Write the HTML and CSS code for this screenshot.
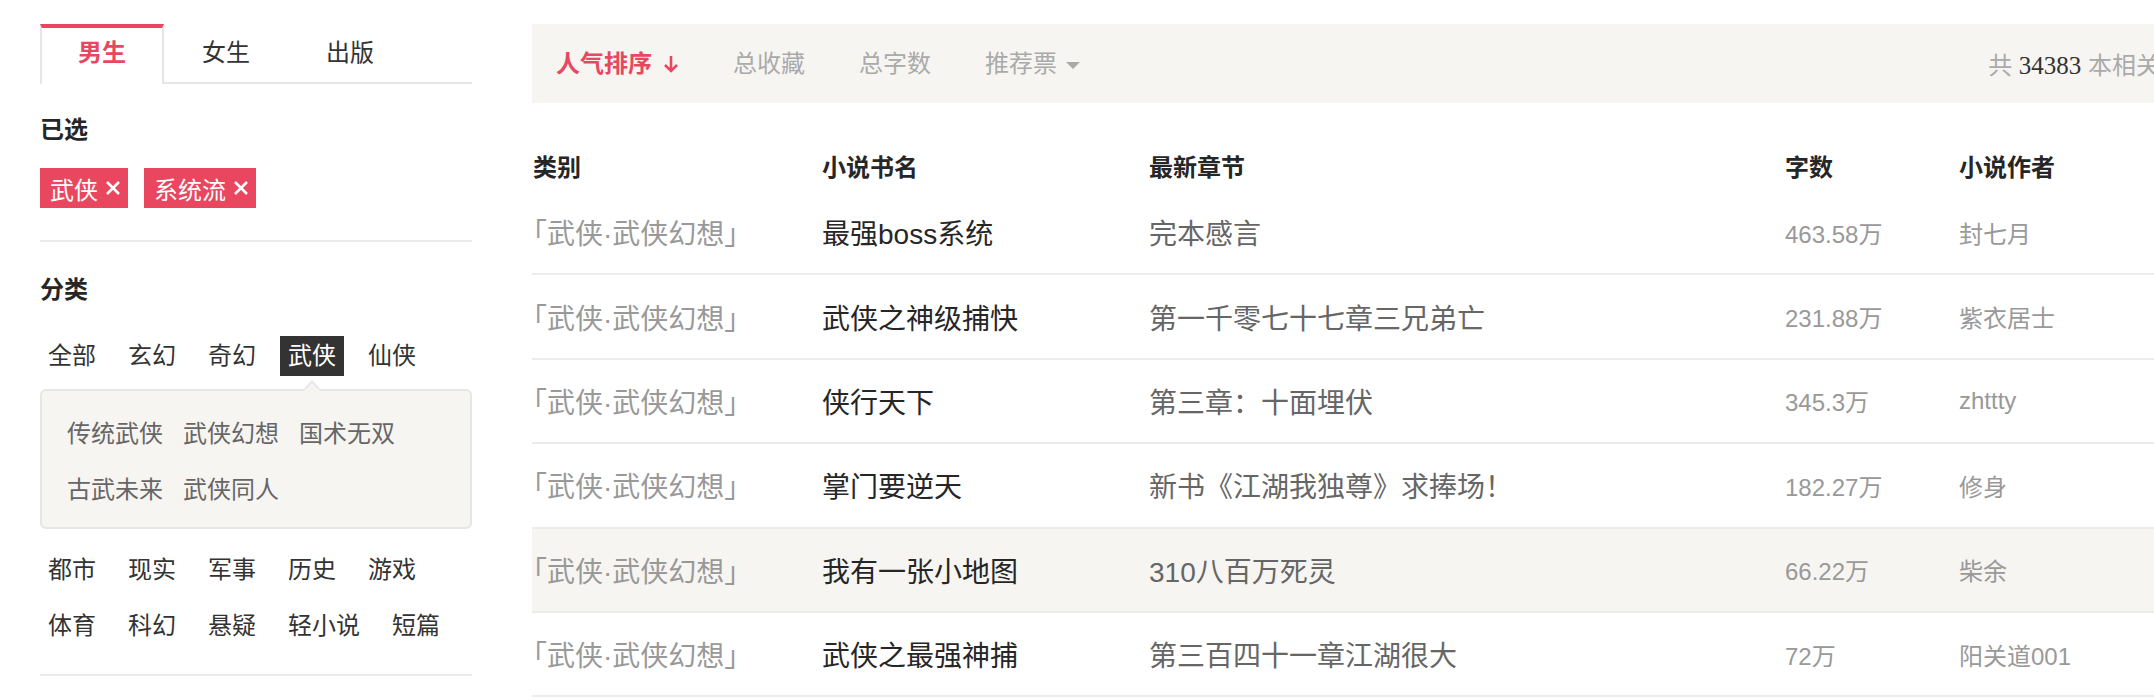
FILE: index.html
```html
<!DOCTYPE html>
<html lang="zh-CN">
  <head>
    <meta charset="UTF-8" />
    <meta name="viewport" content="width=device-width, initial-scale=1.0" />
    <title>全部作品</title>
    <link rel="stylesheet" href="styles.css">
  </head>
  <body>
    <div class="page">
      <aside class="filter">
        <div class="tabs">
          <a class="tabs__item tabs__item--active">男生</a>
          <a class="tabs__item">女生</a>
          <a class="tabs__item">出版</a>
        </div>

        <div class="filter__section">
          <h3 class="filter__title">已选</h3>
          <div class="chosen">
            <span class="chosen__tag">武侠<svg width="16" height="16" viewBox="0 0 16 16"><path d="M2 2l12 12M14 2L2 14" stroke="#fff" stroke-width="2.6" /></svg></span>
            <span class="chosen__tag">系统流<svg width="16" height="16" viewBox="0 0 16 16"><path d="M2 2l12 12M14 2L2 14" stroke="#fff" stroke-width="2.6" /></svg></span>
          </div>
        </div>

        <div class="filter__section filter__section--types">
          <h3 class="filter__title">分类</h3>
          <ul class="types">
            <li class="types__item">全部</li>
            <li class="types__item">玄幻</li>
            <li class="types__item">奇幻</li>
            <li class="types__item types__item--active">武侠</li>
            <li class="types__item">仙侠</li>
            <li class="subtypes">
              <span class="subtypes__item">传统武侠</span>
              <span class="subtypes__item">武侠幻想</span>
              <span class="subtypes__item">国术无双</span>
              <span class="subtypes__item">古武未来</span>
              <span class="subtypes__item">武侠同人</span>
            </li>
            <li class="types__item">都市</li>
            <li class="types__item">现实</li>
            <li class="types__item">军事</li>
            <li class="types__item">历史</li>
            <li class="types__item">游戏</li>
            <li class="types__item">体育</li>
            <li class="types__item">科幻</li>
            <li class="types__item">悬疑</li>
            <li class="types__item">轻小说</li>
            <li class="types__item">短篇</li>
          </ul>
        </div>
      </aside>

      <main class="books">
        <div class="sort">
          <a class="sort__item sort__item--active">人气排序<svg class="sort__arrow" width="16" height="18" viewBox="0 0 16 18"><path d="M8 1v15M2 10l6 6 6-6" fill="none" stroke="currentColor" stroke-width="2.6" /></svg></a>
          <a class="sort__item">总收藏</a>
          <a class="sort__item">总字数</a>
          <a class="sort__item">推荐票<span class="sort__caret"></span></a>
          <p class="sort__total">共 <span class="sort__count">34383</span> 本相关作品</p>
        </div>

        <div class="book-list">
          <div class="book-list__row book-list__row--head">
            <span>类别</span>
            <span>小说书名</span>
            <span>最新章节</span>
            <span>字数</span>
            <span>小说作者</span>
          </div>
          <div class="book-list__row">
            <span class="book-list__type">「武侠·武侠幻想」</span>
            <span class="book-list__name">最强boss系统</span>
            <span class="book-list__chapter">完本感言</span>
            <span class="book-list__count">463.58万</span>
            <span class="book-list__author">封七月</span>
          </div>
          <div class="book-list__row">
            <span class="book-list__type">「武侠·武侠幻想」</span>
            <span class="book-list__name">武侠之神级捕快</span>
            <span class="book-list__chapter">第一千零七十七章三兄弟亡</span>
            <span class="book-list__count">231.88万</span>
            <span class="book-list__author">紫衣居士</span>
          </div>
          <div class="book-list__row">
            <span class="book-list__type">「武侠·武侠幻想」</span>
            <span class="book-list__name">侠行天下</span>
            <span class="book-list__chapter">第三章：十面埋伏</span>
            <span class="book-list__count">345.3万</span>
            <span class="book-list__author">zhttty</span>
          </div>
          <div class="book-list__row">
            <span class="book-list__type">「武侠·武侠幻想」</span>
            <span class="book-list__name">掌门要逆天</span>
            <span class="book-list__chapter">新书《江湖我独尊》求捧场！</span>
            <span class="book-list__count">182.27万</span>
            <span class="book-list__author">修身</span>
          </div>
          <div class="book-list__row book-list__row--hover">
            <span class="book-list__type">「武侠·武侠幻想」</span>
            <span class="book-list__name">我有一张小地图</span>
            <span class="book-list__chapter">310八百万死灵</span>
            <span class="book-list__count">66.22万</span>
            <span class="book-list__author">柴余</span>
          </div>
          <div class="book-list__row">
            <span class="book-list__type">「武侠·武侠幻想」</span>
            <span class="book-list__name">武侠之最强神捕</span>
            <span class="book-list__chapter">第三百四十一章江湖很大</span>
            <span class="book-list__count">72万</span>
            <span class="book-list__author">阳关道001</span>
          </div>
        </div>
      </main>
    </div>
  </body>
</html>
```

FILE: styles.css
```css
* {
  box-sizing: border-box;
}

html,
body {
  overflow: hidden;
}

body {
  margin: 0;
  background: #fff;
  color: #333;
  font-family: 'Liberation Sans', 'Noto Sans CJK SC', sans-serif;
  font-size: 24px;
}

ul {
  list-style: none;
  margin: 0;
  padding: 0;
}

.page {
  display: flex;
  gap: 60px;
  width: 2240px;
  padding: 24px 0 0 40px;
}

/* sidebar */

.filter {
  width: 432px;
  flex-shrink: 0;
}

.tabs {
  display: flex;
  height: 60px;
  border-bottom: 2px solid #e6e6e6;
}

.tabs__item {
  height: 60px;
  padding: 0 36px 6px;
  border: 2px solid transparent;
  border-top-width: 4px;
  border-bottom: 0;
  line-height: 50px;
  color: #333;
}

.tabs__item--active {
  border-color: #e6e6e6;
  border-top-color: #e8475f;
  background: #fff;
  color: #e8475f;
  font-weight: 600;
}

.filter__section {
  padding: 30px 0 32px;
  border-bottom: 2px solid #ebebeb;
}

.filter__section--types {
  padding: 32px 0 12px;
}

.filter__title {
  margin: 0;
  font-size: 24px;
  line-height: 32px;
  font-weight: 600;
  color: #262626;
}

.chosen {
  display: flex;
  gap: 16px;
  margin-top: 22px;
}

.chosen__tag {
  display: flex;
  align-items: center;
  height: 40px;
  padding: 0 7px 0 10px;
  background: #e8475f;
  color: #fff;
}

.chosen__tag svg {
  margin-left: 7px;
}

.types {
  display: flex;
  flex-wrap: wrap;
  margin-top: 30px;
}

.types__item {
  height: 40px;
  line-height: 40px;
  padding: 0 8px;
  margin: 0 16px 16px 0;
}

.types__item--active {
  background: #333;
  color: #fff;
}

.subtypes {
  position: relative;
  flex-basis: 100%;
  display: flex;
  flex-wrap: wrap;
  gap: 16px 20px;
  margin: -3px 0 21px;
  padding: 23px 25px 17px;
  background: #f6f5f2;
  border: 2px solid #e6e6e6;
  border-radius: 6px;
}

.subtypes::before,
.subtypes::after {
  content: '';
  position: absolute;
  left: 260px;
  border: 10px solid transparent;
  border-top: 0;
}

.subtypes::before {
  top: -11px;
  border-bottom: 11px solid #e6e6e6;
}

.subtypes::after {
  top: -8px;
  border-bottom: 10px solid #f6f5f2;
}

.subtypes__item {
  line-height: 40px;
  color: #666;
}

/* book list */

.books {
  width: 1700px;
  flex-shrink: 0;
}

.sort {
  display: flex;
  align-items: center;
  height: 79px;
  padding: 0 24px;
  background: #f6f5f2;
}

.sort__item {
  display: flex;
  align-items: center;
  margin-right: 54px;
  line-height: 32px;
  color: #aaa;
}

.sort__item--active {
  color: #e8475f;
  font-weight: 600;
}

.sort__arrow {
  margin-left: 11px;
}

.sort__caret {
  width: 0;
  height: 0;
  margin: 4px 0 0 9px;
  border: 7px solid transparent;
  border-top-color: #aaa;
  border-bottom: 0;
}

.sort__total {
  margin: 0 0 0 auto;
  color: #aaa;
}

.sort__count {
  font-family: 'Liberation Serif', serif;
  font-size: 25px;
  color: #333;
}

.book-list__row {
  display: grid;
  grid-template-columns: 289px 327px 636px 174px 1fr;
  align-items: center;
  height: 84.4px;
  padding-left: 1px;
  border-bottom: 2px solid #ececec;
  font-size: 28px;
}

.book-list__row--head {
  align-items: start;
  height: 88px;
  padding-top: 49px;
  border-bottom: 0;
  font-size: 24px;
  line-height: 32px;
  font-weight: 600;
  color: #262626;
}

.book-list__row--hover {
  background: #f6f5f2;
}

.book-list__type {
  color: #999;
  font-feature-settings: 'halt';
}

.book-list__name {
  color: #262626;
}

.book-list__chapter {
  color: #666;
}

.book-list__count,
.book-list__author {
  font-size: 24px;
  color: #999;
}
```
